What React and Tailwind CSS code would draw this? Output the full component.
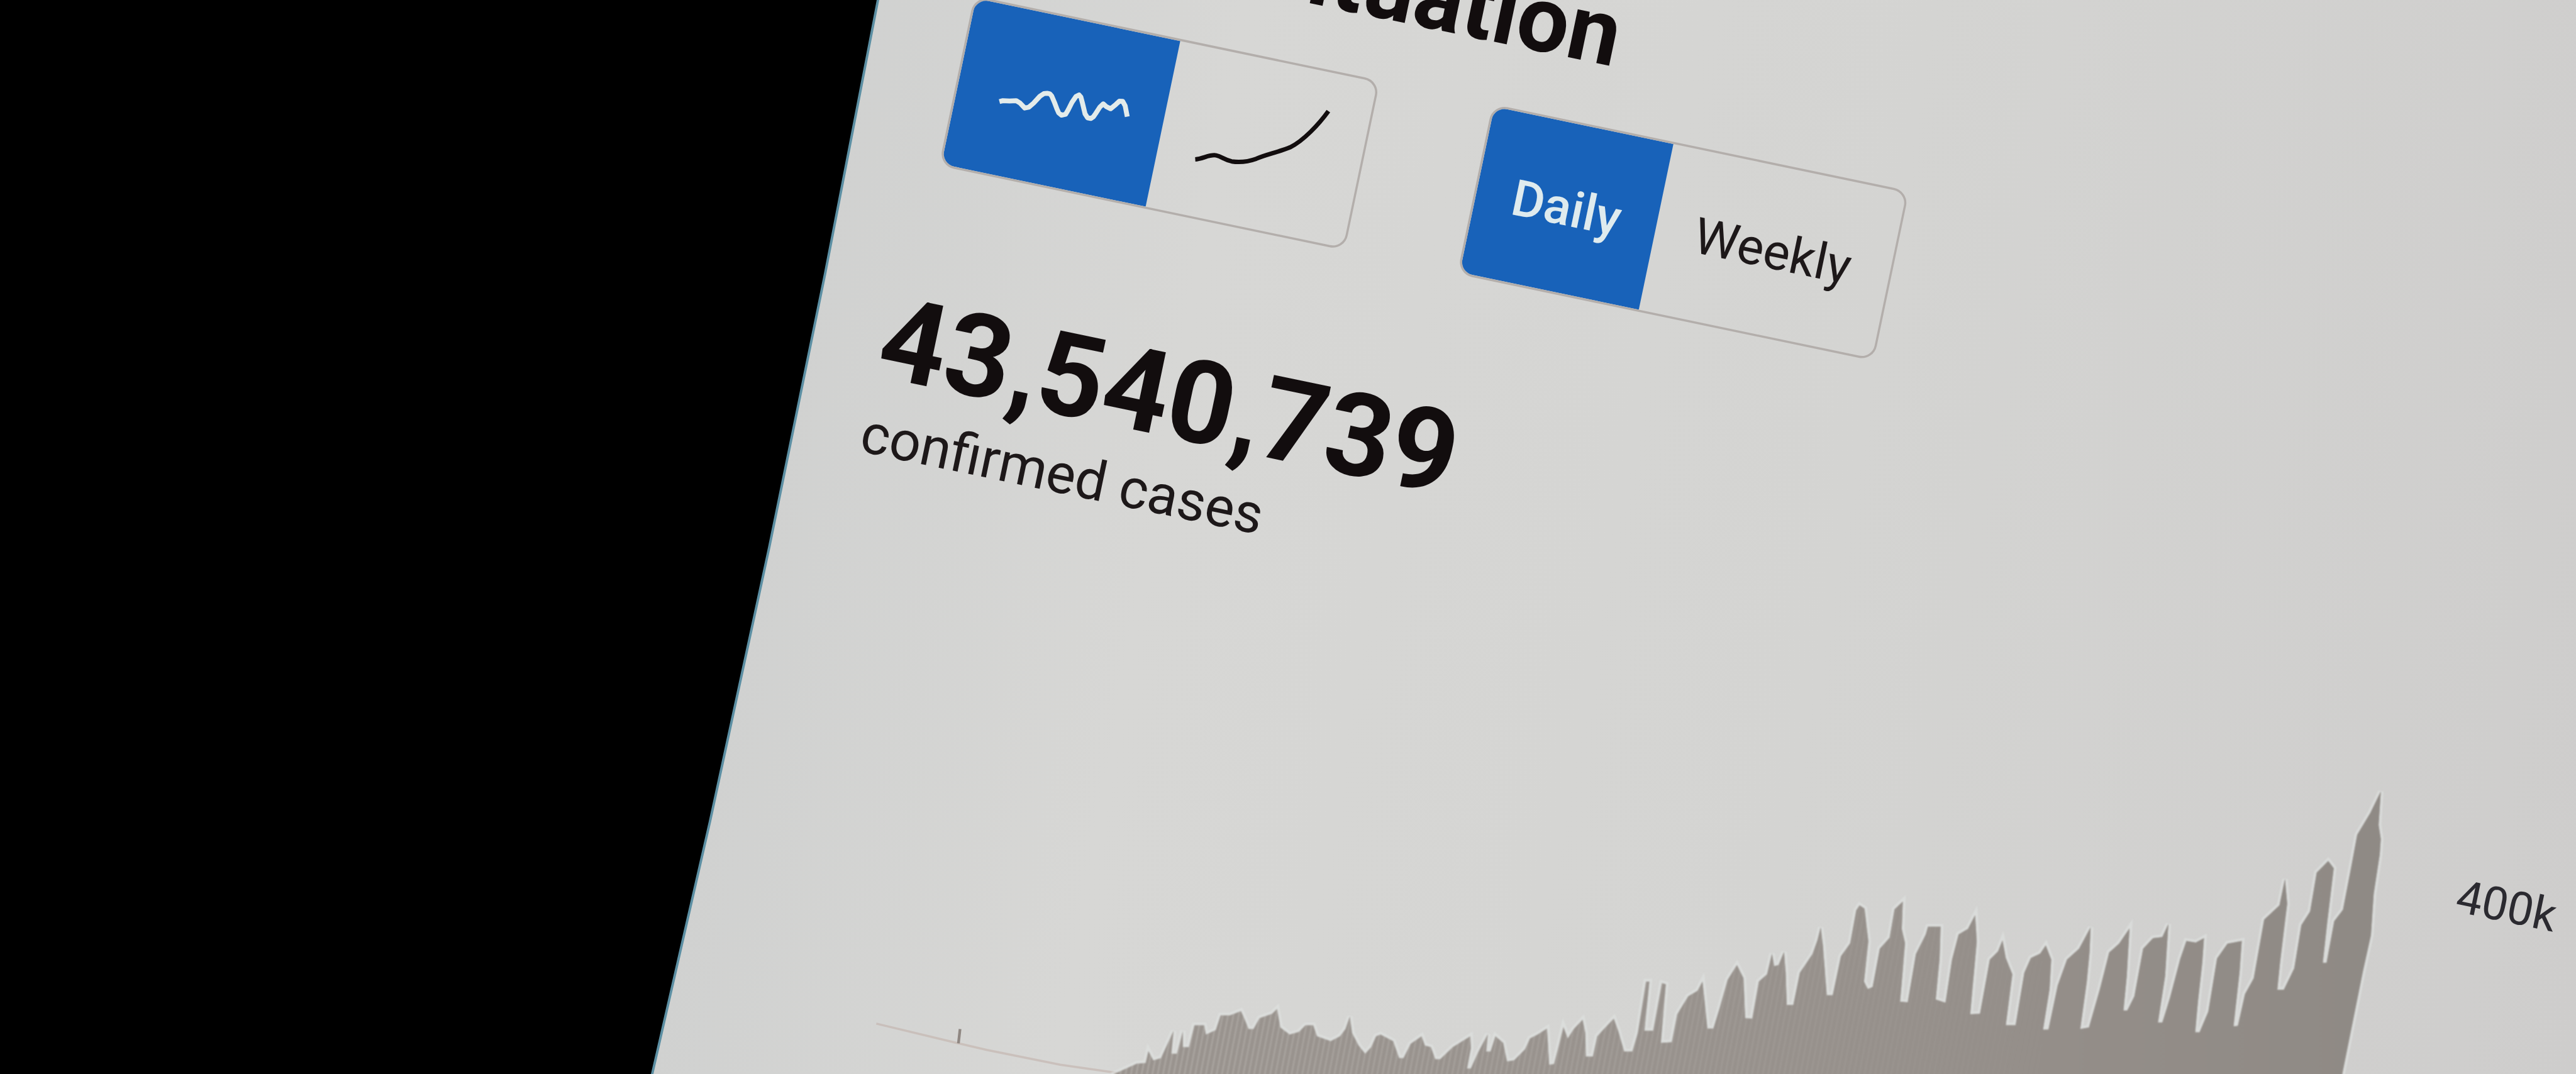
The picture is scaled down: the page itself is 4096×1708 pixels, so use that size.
const CHART_POINTS = [
  [2034, 1962], [2076, 1943], [2092, 1942], [2097, 1920], [2106, 1937], [2120, 1933], [2143, 1883], [2139, 1925], [2149, 1925], [2160, 1883], [2160, 1913], [2171, 1913],
  [2181, 1873], [2199, 1873], [2202, 1890], [2220, 1882], [2229, 1855], [2246, 1855], [2266, 1847], [2272, 1860],
  [2280, 1880], [2289, 1880], [2300, 1860], [2323, 1852], [2332, 1843], [2338, 1877], [2355, 1890], [2372, 1885],
  [2384, 1873], [2398, 1873], [2405, 1893], [2430, 1902], [2447, 1893], [2457, 1880], [2465, 1857], [2469, 1887],
  [2481, 1910], [2493, 1925], [2504, 1913], [2513, 1893], [2521, 1890], [2544, 1902], [2555, 1933], [2563, 1933],
  [2576, 1907], [2596, 1893], [2602, 1910], [2613, 1913], [2621, 1935], [2630, 1935], [2653, 1913], [2685, 1893],
  [2686, 1915], [2679, 1952], [2686, 1952], [2699, 1923], [2717, 1889], [2714, 1921], [2722, 1921], [2731, 1893],
  [2745, 1905], [2752, 1939], [2765, 1937], [2785, 1917], [2794, 1897], [2808, 1890], [2825, 1879], [2827, 1910],
  [2829, 1945], [2838, 1944], [2846, 1913], [2855, 1876], [2863, 1897], [2874, 1880], [2890, 1863], [2895, 1887],
  [2896, 1930], [2909, 1930], [2917, 1893], [2929, 1880], [2947, 1861], [2955, 1883], [2966, 1921], [2981, 1921],
  [2991, 1887], [3006, 1793], [3012, 1793], [3003, 1883], [3019, 1883], [3035, 1796], [3042, 1798], [3033, 1905],
  [3053, 1904], [3063, 1853], [3083, 1820], [3100, 1810], [3109, 1793], [3112, 1820], [3118, 1879], [3129, 1879],
  [3141, 1840], [3155, 1790], [3172, 1763], [3184, 1787], [3187, 1860], [3200, 1861], [3212, 1793], [3227, 1780],
  [3236, 1742], [3240, 1765], [3248, 1763], [3258, 1739], [3261, 1777], [3263, 1836], [3275, 1836], [3287, 1777],
  [3310, 1743], [3319, 1718], [3325, 1694], [3329, 1727], [3336, 1818], [3347, 1818], [3362, 1747], [3379, 1723], [3390, 1663],
  [3396, 1654], [3405, 1660], [3412, 1720], [3404, 1793], [3411, 1807], [3420, 1803], [3433, 1733], [3451, 1713],
  [3460, 1661], [3475, 1647], [3473, 1697], [3479, 1723], [3470, 1830], [3484, 1831], [3499, 1743], [3517, 1707],
  [3521, 1693], [3544, 1693], [3542, 1753], [3535, 1826], [3553, 1832], [3565, 1753], [3577, 1707], [3594, 1697],
  [3607, 1672], [3610, 1720], [3598, 1853], [3616, 1852], [3634, 1753], [3649, 1738], [3657, 1718], [3663, 1750], [3675, 1780],
  [3663, 1873], [3681, 1873], [3697, 1777], [3709, 1750], [3726, 1742], [3736, 1727], [3746, 1753], [3743, 1807], [3731, 1881],
  [3741, 1881], [3758, 1800], [3775, 1753], [3797, 1733], [3818, 1694], [3816, 1740], [3811, 1793], [3799, 1880], [3815, 1877],
  [3835, 1807], [3852, 1740], [3870, 1724], [3889, 1696], [3884, 1783], [3878, 1846], [3885, 1846], [3898, 1820], [3914, 1733],
  [3932, 1714], [3949, 1712], [3960, 1688], [3954, 1783], [3941, 1868], [3949, 1868], [3963, 1823], [3982, 1751],
  [3993, 1719], [4010, 1722], [4025, 1714], [4022, 1758], [4014, 1830], [4009, 1886], [4017, 1886], [4033, 1848],
  [4049, 1751], [4068, 1724], [4094, 1719], [4090, 1776], [4079, 1875], [4087, 1874], [4100, 1816], [4116, 1787],
  [4135, 1680], [4163, 1654], [4173, 1606], [4177, 1651], [4164, 1758], [4159, 1808], [4171, 1808], [4190, 1769],
  [4203, 1690], [4219, 1665], [4231, 1594], [4252, 1573], [4262, 1586], [4250, 1687], [4242, 1759], [4249, 1759],
  [4263, 1683], [4279, 1662], [4295, 1579], [4305, 1525], [4329, 1485], [4348, 1446], [4344, 1507], [4348, 1533],
  [4346, 1561], [4335, 1633], [4330, 1708], [4315, 1776], [4276, 1970], [2034, 1970],
];

function CasesChart() {
  const points = CHART_POINTS.map((p) => p.join(",")).join(" ");
  return (
    <svg viewBox="0 0 4704 1962" className="absolute inset-0 h-full w-full" fill="none">
      <defs>
        <pattern id="days" width="9.6" height="20" patternUnits="userSpaceOnUse" patternTransform="rotate(11)">
          <rect width="9.6" height="20" fill="#99938e" />
          <rect width="3.2" height="20" fill="#aaa5a0" />
        </pattern>
        <linearGradient id="solid" x1="2034" x2="4350" y1="0" y2="0" gradientUnits="userSpaceOnUse">
          <stop offset="0" stopColor="#98928d" stopOpacity="0" />
          <stop offset="0.35" stopColor="#98928d" stopOpacity="0.4" />
          <stop offset="0.75" stopColor="#948e89" stopOpacity="1" />
          <stop offset="1" stopColor="#8f8a85" stopOpacity="1" />
        </linearGradient>
      </defs>
      <path d="M1600 1870 L1750 1906 L1802 1918 L1936 1945 L2040 1960" stroke="#c4b6b0" strokeWidth="4" opacity="0.7" />
      <path d="M1753 1880 L1750 1906" stroke="#8f8782" strokeWidth="5" />
      <g className="blur-[1.5px]">
        <polygon points={points} stroke="#dfe2e1" strokeWidth="10" strokeOpacity="0.6" />
        <polygon points={points} fill="url(#days)" />
        <polygon points={points} fill="url(#solid)" />
      </g>
    </svg>
  );
}

function WaveIcon() {
  return (
    <svg viewBox="0 0 384 311" className="h-[311px] w-[384px]" fill="none" stroke="#e3ebea" strokeWidth="9" strokeLinejoin="round">
      <path d="M81 177 L87 174 L99 172 L111 169 L119 172 L129 179 L136 176 L143 167 L152 152 L158 146 L164 144 L169 144 L173 147 L180 157 L187 168 L192 175 L198 178 L205 175 L208 166 L212 151 L217 139 L222 135 L226 138 L231 148 L240 167 L246 173 L252 173 L256 169 L259 162 L264 149 L269 142 L276 146 L284 148 L292 138 L297 131 L303 130 L309 137 L317 156" />
    </svg>
  );
}

function CurveIcon() {
  return (
    <svg viewBox="0 0 367 311" className="h-[311px] w-[367px]" fill="none" stroke="#120d0e" strokeWidth="8" strokeLinejoin="round">
      <path d="M70 207 C84 203 94 192 106 192 C116 192 122 197 136 197 C154 196 166 191 179 183 C194 172 216 163 235 150 C256 134 278 98 290 71" />
    </svg>
  );
}

function Toggle({ left, right, leftWidth, rightWidth }) {
  return (
    <div className="flex h-[317px] items-stretch overflow-hidden rounded-[28px] border-4 border-[#b3aeab]">
      <div className={`flex items-center justify-center bg-[#1862b9] ${leftWidth}`}>{left}</div>
      <div className={`flex items-center justify-center ${rightWidth}`}>{right}</div>
    </div>
  );
}

export default function App() {
  return (
    <div className="relative h-[1708px] w-[4096px] overflow-hidden bg-black">
      <div className="h-full w-full bg-[#5c8fa3] [clip-path:polygon(1394px_0px,4096px_0px,4096px_1708px,1035px_1708px,1127px_1306px,1221px_871px,1310px_435px)]">
        <div className="relative h-full w-full overflow-hidden bg-[linear-gradient(100deg,#d0d1d0_30%,#d7d7d5_45%,#d4d4d2_70%,#cecdcc_100%)] [clip-path:polygon(1398px_0px,4096px_0px,4096px_1708px,1039px_1708px,1131px_1306px,1225px_871px,1314px_435px)]">
          <CasesChart />
          <main className="flex w-[3500px] origin-top-left flex-col items-start whitespace-nowrap pt-[23px] font-['Roboto',sans-serif] text-[#120d0e] [transform:translate(1566px,-248.7px)_rotate(11.8deg)_scale(0.8707)]">
            <h1 className="text-[168.6px] leading-[168px] font-bold">Global Situation</h1>
            <div className="mt-[85px] ml-[38px] flex gap-[210px]">
              <Toggle
                left={<WaveIcon />}
                right={<CurveIcon />}
                leftWidth="w-[381px]"
                rightWidth="w-[368px]"
              />
              <Toggle
                left={<span className="text-[92px] leading-none font-medium text-[#dfebee]">Daily</span>}
                right={<span className="text-[92px] leading-none text-[#1d1819]">Weekly</span>}
                leftWidth="w-[334px]"
                rightWidth="w-[435px]"
              />
            </div>
            <div className="mt-[222px] text-[211px] leading-[211px] font-bold">43,540,739</div>
            <div className="mt-[23px] text-[101.2px] leading-[100px] text-[#1d1819]">confirmed cases</div>
            <div className="mt-[141px] ml-[3025px] text-[84px] leading-[84px] text-[#2b2a30]">400k</div>
          </main>
        </div>
      </div>
    </div>
  );
}
